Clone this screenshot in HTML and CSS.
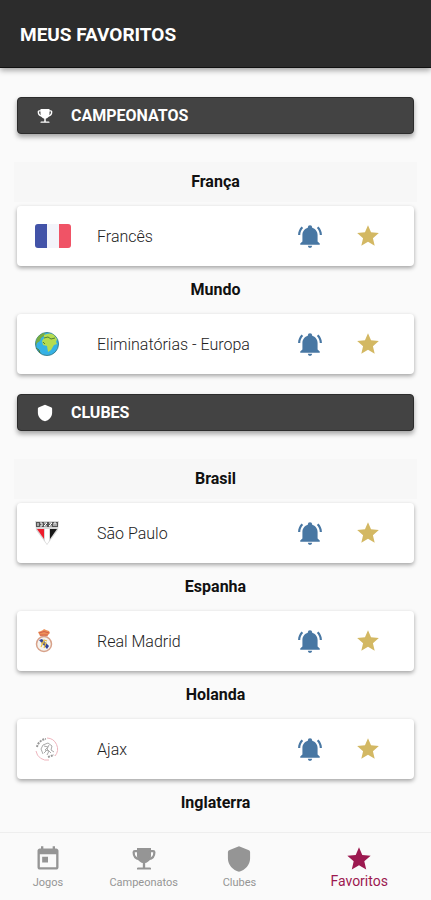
FILE: index.html
```
<!DOCTYPE html>
<html lang="pt-BR">
    <head>
        <meta charset="utf-8">
        <meta name="viewport" content="width=device-width, initial-scale=1">
        <title>Meus Favoritos</title>
        <link rel="stylesheet" href="styles.css">
    </head>
    <body>
        <!-- shared icons -->
        <svg class="sprite" aria-hidden="true">
            <symbol id="bell" viewBox="0 0 24 24"><path d="M21,19V20H3V19L5,17V11C5,7.9 7.03,5.17 10,4.29V4A2,2 0 0,1 14,4V4.29C16.97,5.17 19,7.9 19,11V17L21,19M14,21A2,2 0 0,1 10,21M19.75,3.19L18.33,4.61C20.04,6.3 21,8.6 21,11H23C23,8.07 21.84,5.25 19.75,3.19M1,11H3C3,8.6 3.96,6.3 5.67,4.61L4.25,3.19C2.16,5.25 1,8.07 1,11Z"/></symbol>
            <symbol id="star" viewBox="0 0 24 24"><path d="M12,17.27L18.18,21L16.54,13.97L22,9.24L14.81,8.62L12,2L9.19,8.62L2,9.24L7.45,13.97L5.82,21L12,17.27Z"/></symbol>
            <symbol id="shield" viewBox="0 0 24 24"><path d="M12 1L4 4.2Q2.500 4.700 2.500 6V11.5C2.500 17 6.8 21.5 12 23C17.200 21.500 21.500 17 21.500 11.500V6Q21.500 4.700 20 4.200Z"/></symbol>
            <symbol id="trophy" viewBox="0 0 24 24">
                <path d="M6 2.500H18V9C18 12.500 16 14.700 13 15.500V19.200H17Q18 19.200 18 20V21H6V20Q6 19.200 7 19.200H11V15.500C8 14.700 6 12.500 6 9Z"/>
                <path d="M7 5.200H4.200Q3.100 5.200 3.100 6.300C3.100 9.500 4.700 11.800 8 12.200M17 5.200H19.800Q20.900 5.200 20.900 6.300C20.900 9.500 19.300 11.800 16 12.200" fill="none" stroke="currentColor" stroke-width="1.900"/>
            </symbol>
            <symbol id="today" viewBox="0 0 24 24"><path d="M19 3h-1V1h-2v2H8V1H6v2H5c-1.110 0-2 .9-2 2v14c0 1.100.89 2 2 2h14c1.100 0 2-.9 2-2V5c0-1.100-.9-2-2-2zm0 16H5V8h14v11zM7 10h5v5H7z"/></symbol>
        </svg>

        <header class="topbar">
            <h1>MEUS FAVORITOS</h1>
        </header>

        <main class="content">
            <section>
                <h2 class="bar"><svg class="bar-icon"><use href="#trophy"/></svg>CAMPEONATOS</h2>
                <h3 class="group shaded">França</h3>
                <div class="card">
                    <svg class="flag" viewBox="0 0 36 24">
                        <rect width="36" height="24" rx="3" fill="#f3f4fa"/>
                        <path d="M3 0H12V24H3Q0 24 0 21V3Q0 0 3 0Z" fill="#4253a8"/>
                        <path d="M24 0H33Q36 0 36 3V21Q36 24 33 24H24Z" fill="#f05366"/>
                    </svg>
                    <span class="name">Francês</span>
                    <button class="alert" aria-label="Notificações"><svg><use href="#bell"/></svg></button>
                    <button class="fav" aria-label="Remover dos favoritos"><svg><use href="#star"/></svg></button>
                </div>
                <h3 class="group">Mundo</h3>
                <div class="card">
                    <svg class="crest" viewBox="0 0 24 24">
                        <circle cx="12" cy="12" r="11.500" fill="#35b2e6" stroke="#3f8392"/>
                        <path d="M2 6C4 3 7 1 10 1L9 4L6 6L5 9L2 11L1 14Q0 10 2 6Z" fill="#76ac43"/>
                        <path d="M9 3Q15 0 19 3L22 7L21 10L22 12L19 13L16 18L13 20L12 14L8 13L7 9L9 6Z" fill="#b5dc51"/>
                        <path d="M9 6L13 5L16 7L20 6M8 10L10 12M1 16L4 18L5 21" fill="none" stroke="#508036"/>
                    </svg>
                    <span class="name">Eliminatórias - Europa</span>
                    <button class="alert" aria-label="Notificações"><svg><use href="#bell"/></svg></button>
                    <button class="fav" aria-label="Remover dos favoritos"><svg><use href="#star"/></svg></button>
                </div>
            </section>

            <section>
                <h2 class="bar"><svg class="bar-icon"><use href="#shield"/></svg>CLUBES</h2>
                <h3 class="group shaded">Brasil</h3>
                <div class="card">
                    <svg class="crest" viewBox="0 0 24 24">
                        <path d="M0 0H24L23 9L12 24L1 9Z" fill="#d8d8d8"/>
                        <path d="M1 1H23V6H1Z" fill="#555"/>
                        <path d="M3 2V5M5 2H7V5H5M9 2H12L9 5H12M14 2H17L14 5H17M19 5V2H21V5" fill="none" stroke="#fff"/>
                        <path d="M2 8H9V18Z" fill="#ed1c2b"/>
                        <path d="M15 8H22L15 18Z" fill="#171717"/>
                        <path d="M10 8H14V20L12 23L10 20Z" fill="#fff"/>
                    </svg>
                    <span class="name">São Paulo</span>
                    <button class="alert" aria-label="Notificações"><svg><use href="#bell"/></svg></button>
                    <button class="fav" aria-label="Remover dos favoritos"><svg><use href="#star"/></svg></button>
                </div>
                <h3 class="group">Espanha</h3>
                <div class="card">
                    <svg class="crest" viewBox="0 0 24 24">
                        <path d="M5 7L3 3L6 2L8 1L9 0L11 1L14 2L15 4L12 7Z" fill="#ed9158"/>
                        <path d="M4 4Q9 1 14 4M5 6H13" fill="none" stroke="#d2604b"/>
                        <circle cx="9" cy="15" r="7.500" fill="#f5f3ef" stroke="#d8a28a" stroke-width="1.500"/>
                        <path d="M4 11L7 10L14 17L12 20Z" fill="#31449a"/>
                        <path d="M6 18L9 11L12 12M6 14H11L9 19" fill="none" stroke="#e7bd45" stroke-width="1.200"/>
                    </svg>
                    <span class="name">Real Madrid</span>
                    <button class="alert" aria-label="Notificações"><svg><use href="#bell"/></svg></button>
                    <button class="fav" aria-label="Remover dos favoritos"><svg><use href="#star"/></svg></button>
                </div>
                <h3 class="group">Holanda</h3>
                <div class="card">
                    <svg class="crest" viewBox="0 0 24 24">
                        <g fill="none">
                            <path d="M12 1A11 11 0 0 1 20 19M14 23A11 11 0 0 1 1 14" stroke="#eeb5bd"/>
                            <path d="M2 10A10 10 0 0 1 11 2M13 20L19 18" stroke="#999" stroke-width="2" stroke-dasharray="2 1"/>
                            <path d="M8 17L6 12L8 8L13 6L17 9L16 13L19 15M9 9L13 10L10 13L14 14L12 18M9 16L12 13M14 8L12 12L16 16" stroke="#aaa"/>
                        </g>
                    </svg>
                    <span class="name">Ajax</span>
                    <button class="alert" aria-label="Notificações"><svg><use href="#bell"/></svg></button>
                    <button class="fav" aria-label="Remover dos favoritos"><svg><use href="#star"/></svg></button>
                </div>
                <h3 class="group">Inglaterra</h3>
            </section>
        </main>

        <nav class="tabs">
            <a href="#jogos"><svg><use href="#today"/></svg>Jogos</a>
            <a href="#campeonatos"><svg><use href="#trophy"/></svg>Campeonatos</a>
            <a href="#clubes"><svg><use href="#shield"/></svg>Clubes</a>
            <a href="#favoritos" class="active"><svg><use href="#star"/></svg>Favoritos</a>
        </nav>
    </body>
</html>
```
FILE: styles.css
```
* {
    box-sizing: border-box;
}

html, body {
    height: 100%;
}

body {
    display: flex;
    flex-direction: column;
    margin: 0;
    background-color: #fafafa;
    color: #111;
    font-family: Roboto, Arial, sans-serif;
    overflow: hidden;
}

h1, h2, h3 {
    margin: 0;
    font-weight: 700;
}

svg {
    display: block;
    fill: currentColor;
}

.sprite {
    position: absolute;
    width: 0;
    height: 0;
}

.topbar {
    flex: none;
    padding: 21px 20px 19px;
    background-color: #2c2c2c;
    border-bottom: 1px solid #111;
    box-shadow: 0 2px 6px rgba(0, 0, 0, 0.4);
    color: #fff;
    z-index: 1;
}

.topbar h1 {
    font-size: 19px;
    line-height: 27px;
}

.content {
    flex: 1;
    min-height: 0;
    padding: 29px 14px 0;
    overflow: hidden;
}

section {
    margin-bottom: 20px;
}

.bar {
    display: flex;
    align-items: center;
    height: 37px;
    margin: 0 3px 28px;
    padding-left: 18px;
    background-color: #434343;
    border: 1px solid #2c2c2c;
    border-radius: 4px;
    box-shadow: 0 3px 5px rgba(0, 0, 0, 0.35);
    color: #fff;
    font-size: 16px;
}

.bar-icon {
    width: 18px;
    height: 18px;
    margin-right: 17px;
}

.group {
    margin: 4px 0;
    font-size: 16px;
    line-height: 40px;
    text-align: center;
}

.shaded {
    background-color: #f7f7f7;
}

.card {
    display: flex;
    align-items: center;
    height: 60px;
    margin: 0 3px;
    padding: 0 33px 0 18px;
    background-color: #fff;
    border-radius: 4px;
    box-shadow: 0 2px 4px rgba(0, 0, 0, 0.35);
}

.flag {
    width: 36px;
    height: 24px;
    margin-right: 26px;
}

.crest {
    width: 24px;
    height: 24px;
    margin-right: 38px;
}

.name {
    flex: 1;
    color: #222;
    font-size: 16px;
    font-weight: 300;
}

.card button {
    padding: 0;
    border: 0;
    background: none;
    cursor: pointer;
}

.card button svg {
    width: 26px;
    height: 26px;
}

.card .alert {
    margin-right: 32px;
    color: #4877a3;
}

.card .fav {
    color: #d3b863;
}

.tabs {
    display: flex;
    flex: none;
    height: 68px;
    background-color: #fafafa;
    border-top: 1px solid #eee;
}

.tabs a {
    display: flex;
    flex: 2;
    flex-direction: column;
    align-items: center;
    min-width: 0;
    padding-top: 12px;
    color: #959595;
    font-size: 11px;
    line-height: 20px;
    text-decoration: none;
}

.tabs svg {
    width: 28px;
    height: 28px;
}

.tabs .active {
    flex: 3;
    color: #9c1950;
    font-size: 14px;
    line-height: 16px;
}
```
